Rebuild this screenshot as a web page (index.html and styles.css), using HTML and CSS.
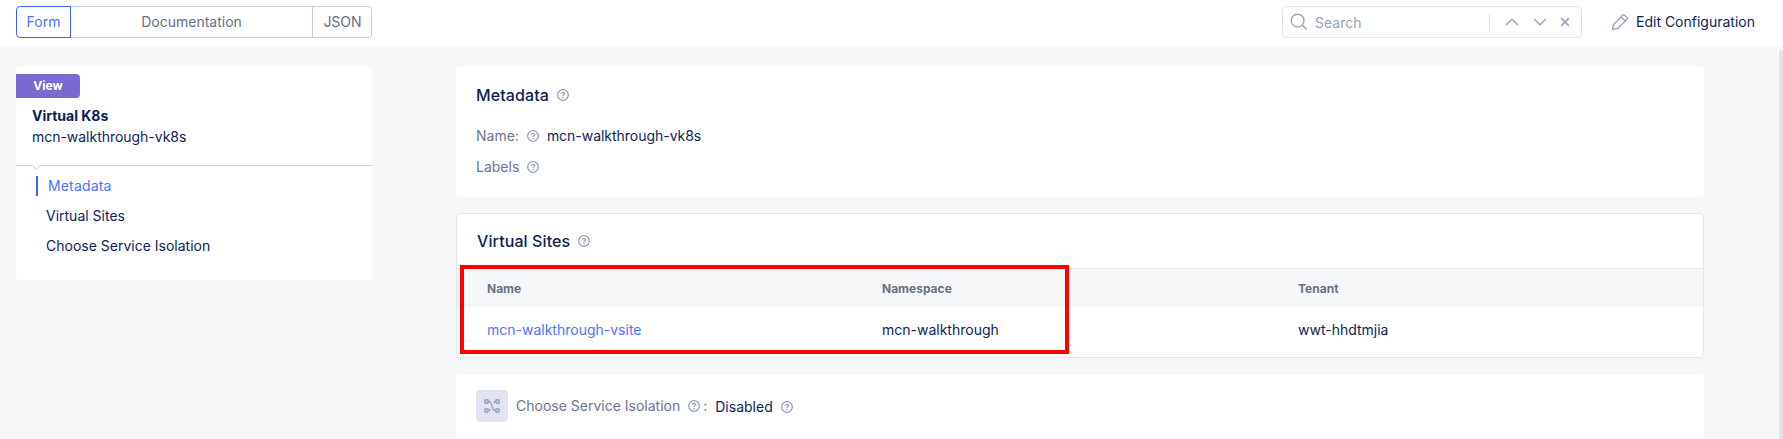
FILE: index.html
```html
<!DOCTYPE html>
<html lang="en">
<head>
<meta charset="utf-8">
<title>Virtual K8s</title>
<link rel="stylesheet" href="styles.css">
</head>
<body>
<svg class="defs" width="0" height="0" aria-hidden="true">
  <symbol id="help" viewBox="0 0 12 12"><g fill="none" stroke="currentColor"><circle cx="6" cy="6" r="5.35" stroke-width="1.3"/><path d="M4.5 4.7C4.5 2.9 7.5 2.9 7.5 4.7C7.5 5.8 6 5.7 6 7" stroke-width="1.3"/></g><circle cx="6" cy="8.6" r=".8" fill="currentColor"/></symbol>
</svg>
<header class="topbar">
  <div class="tabs">
    <span class="tab tab-active">Form</span>
    <span class="tab tab-doc">Documentation</span>
    <span class="tab tab-json">JSON</span>
  </div>
  <div class="search">
    <svg class="search-icon" width="18" height="18" viewBox="0 0 18 18"><g fill="none" stroke="currentColor" stroke-width="1.4"><circle cx="7.6" cy="7.6" r="6.4"/><path d="M12.1 12.1L16.6 16.6"/></g></svg>
    <span class="search-text">Search</span>
    <span class="search-divider"></span>
    <svg class="up" width="14" height="8" viewBox="0 0 14 8"><path d="M1 7L7 1.2L13 7" fill="none" stroke="currentColor" stroke-width="1.5"/></svg>
    <svg class="down" width="14" height="8" viewBox="0 0 14 8"><path d="M1 1L7 6.8L13 1" fill="none" stroke="currentColor" stroke-width="1.5"/></svg>
    <svg class="close" width="10" height="10" viewBox="0 0 10 10"><path d="M1.2 1.2L8.8 8.8M8.8 1.2L1.2 8.8" fill="none" stroke="currentColor" stroke-width="1.7"/></svg>
  </div>
  <div class="edit">
    <svg width="18" height="18" viewBox="0 0 18 18"><path d="M1.5 16.4L2.4 11.8L11.6 2.3Q12.5 1.4 13.4 2.2L16 4.6Q16.8 5.4 16 6.2L6.6 15.4ZM10.1 3.9L14.3 7.9" fill="none" stroke="currentColor" stroke-width="1.4" stroke-linejoin="round"/></svg>
    <span>Edit Configuration</span>
  </div>
</header>
<div class="body">
  <aside class="side">
    <span class="badge">View</span>
    <div class="side-title">Virtual K8s</div>
    <div class="side-name">mcn-walkthrough-vk8s</div>
    <svg class="notch" width="356" height="8" viewBox="0 0 356 8"><path d="M0 1.5H16.5L20.5 5.5L24.5 1.5H356" fill="none" stroke="currentColor"/></svg>
    <nav class="nav">
      <a class="nav-item nav-active">Metadata</a>
      <a class="nav-item">Virtual Sites</a>
      <a class="nav-item">Choose Service Isolation</a>
    </nav>
  </aside>
  <main class="main">
    <section class="card meta">
      <h2 class="heading">Metadata <svg class="help"><use href="#help"/></svg></h2>
      <div class="field field-name"><span>Name:</span><svg class="help"><use href="#help"/></svg><span class="value">mcn-walkthrough-vk8s</span></div>
      <div class="field"><span>Labels</span><svg class="help"><use href="#help"/></svg></div>
    </section>
    <section class="card sites">
      <h2 class="heading sites-heading">Virtual Sites <svg class="help"><use href="#help"/></svg></h2>
      <div class="row row-head"><span>Name</span><span>Namespace</span><span>Tenant</span></div>
      <div class="row"><a class="link">mcn-walkthrough-vsite</a><span>mcn-walkthrough</span><span>wwt-hhdtmjia</span></div>
      <div class="highlight"></div>
    </section>
    <section class="card isolation">
      <span class="tile"><svg width="16" height="14" viewBox="0 0 16 14"><g fill="none" stroke="currentColor" stroke-width="1.6"><rect x=".9" y=".9" width="3.2" height="3.2" rx=".8"/><rect x="11.9" y=".9" width="3.2" height="3.2" rx=".8"/><rect x=".9" y="9.9" width="3.2" height="3.2" rx=".8"/><rect x="11.9" y="9.9" width="3.2" height="3.2" rx=".8"/><path d="M4.1 2.5H5.3C8 2.5 8 11.5 10.7 11.5H11.9M11.9 2.5H10.8L9.6 4M4.1 11.5H5.2L6.4 10" stroke-width="1.3"/></g></svg></span>
      <span class="iso-label">Choose Service Isolation</span>
      <svg class="help iso-help"><use href="#help"/></svg>
      <span class="colon">:</span>
      <span class="iso-value">Disabled</span>
      <svg class="help iso-help2"><use href="#help"/></svg>
    </section>
  </main>
  <div class="scrollbar"></div>
</div>
</body>
</html>
```
FILE: styles.css
```css
* { box-sizing: border-box; }
body { margin: 0; height: 439px; overflow: hidden; background: #f5f7f9; color: #0f1e57; font: 14px/20px Inter, "Liberation Sans", sans-serif; }
svg { display: block; flex: none; }
span, a { white-space: nowrap; }
.defs { position: absolute; }
.topbar { display: flex; height: 46px; padding: 6px 0 0 16px; background: #fff; }
.tabs { display: flex; flex: none; width: 356px; height: 32px; color: #667085; line-height: 30px; text-align: center; }
.tab { border: 1px solid #c8cce0; border-left: 0; }
.tab-active { width: 55px; border: 1px solid #3d63f5; border-radius: 4px 0 0 4px; color: #4f73ff; }
.tab-doc { width: 242px; }
.tab-json { flex: 1; padding-left: 1px; border-radius: 0 4px 4px 0; }
.search { display: flex; flex: none; align-items: center; width: 300px; height: 32px; margin-left: 910px; padding: 0 11px 0 7px; border: 1px solid #e1e3f0; border-radius: 4px; color: #9aa5bd; }
.search-text { width: 175px; margin-left: 7px; padding-top: 2px; color: #98a3b8; }
.search-divider { width: 1px; height: 16px; background: #dcdfec; }
.up { margin-left: 15px; }
.down { margin-left: 14px; }
.close { margin-left: 13px; }
.edit { display: flex; align-items: center; height: 32px; margin-left: 29px; gap: 7px; }
.edit svg { color: #9aa5bd; }
.edit span { line-height: 32px; }
.body { display: flex; height: 393px; padding-left: 16px; }
.side { width: 356px; height: 214px; margin-top: 20px; padding-top: 8px; border-radius: 4px; background: #fff; }
.badge { display: block; width: 64px; height: 24px; border-radius: 0 4px 4px 0; background: #7b68d0; color: #fff; font-size: 12px; font-weight: 700; line-height: 24px; text-align: center; }
.side-title { margin: 8px 0 0 16px; font-weight: 700; }
.side-name { margin: 1px 0 0 16px; letter-spacing: -.03px; }
.notch { margin-top: 17px; color: #c8cce8; }
.nav { display: flex; flex-direction: column; gap: 10px; padding: 4px 0 0 20px; }
.nav-item { padding-left: 10px; }
.nav-active { border-left: 2px solid #3d63f5; color: #4f73ff; letter-spacing: .15px; }
.main { width: 1248px; margin: 20px 0 0 84px; }
.card { border-radius: 4px; background: #fff; }
.help { width: 12px; height: 12px; color: #98a1b9; }
.heading { display: flex; align-items: center; gap: 8px; margin: 0; font-size: 16px; font-weight: 500; line-height: 24px; letter-spacing: .1px; }
.meta { height: 131px; padding: 17px 20px; }
.field { display: flex; align-items: center; gap: 8px; margin-top: 11px; color: #6b7690; }
.field-name { margin-top: 19px; }
.value { color: #0f1e57; letter-spacing: -.03px; }
.sites { position: relative; height: 145px; margin-top: 16px; border: 1px solid #e1e3f0; }
.sites-heading { height: 55px; padding-left: 20px; border-bottom: 1px solid #e1e3f0; }
.row { display: grid; grid-template-columns: 395px 416px 1fr; align-items: center; height: 46px; padding-left: 30px; }
.row-head { height: 38px; padding-top: 2px; background: #f5f7f9; color: #667085; font-size: 12px; font-weight: 700; }
.link { color: #4f73ff; }
.highlight { position: absolute; left: 3px; top: 51px; width: 609px; height: 89px; border: 4px solid #ff0000; }
.isolation { display: flex; align-items: center; height: 64px; margin-top: 16px; padding-left: 20px; }
.tile { display: grid; place-items: center; width: 32px; height: 32px; border-radius: 4px; background: #e1e3f0; color: #9aa3bb; }
.iso-label { margin-left: 8px; color: #6b7690; }
.iso-help { margin-left: 8px; }
.colon { margin-left: 3px; color: #6b7690; }
.iso-value { margin: 2px 0 0 8px; }
.iso-help2 { margin: 2px 0 0 8px; }
.scrollbar { width: 4px; margin: 4px 0 0 auto; border-radius: 4px 4px 0 0; background: #e1e3f0; }
```
